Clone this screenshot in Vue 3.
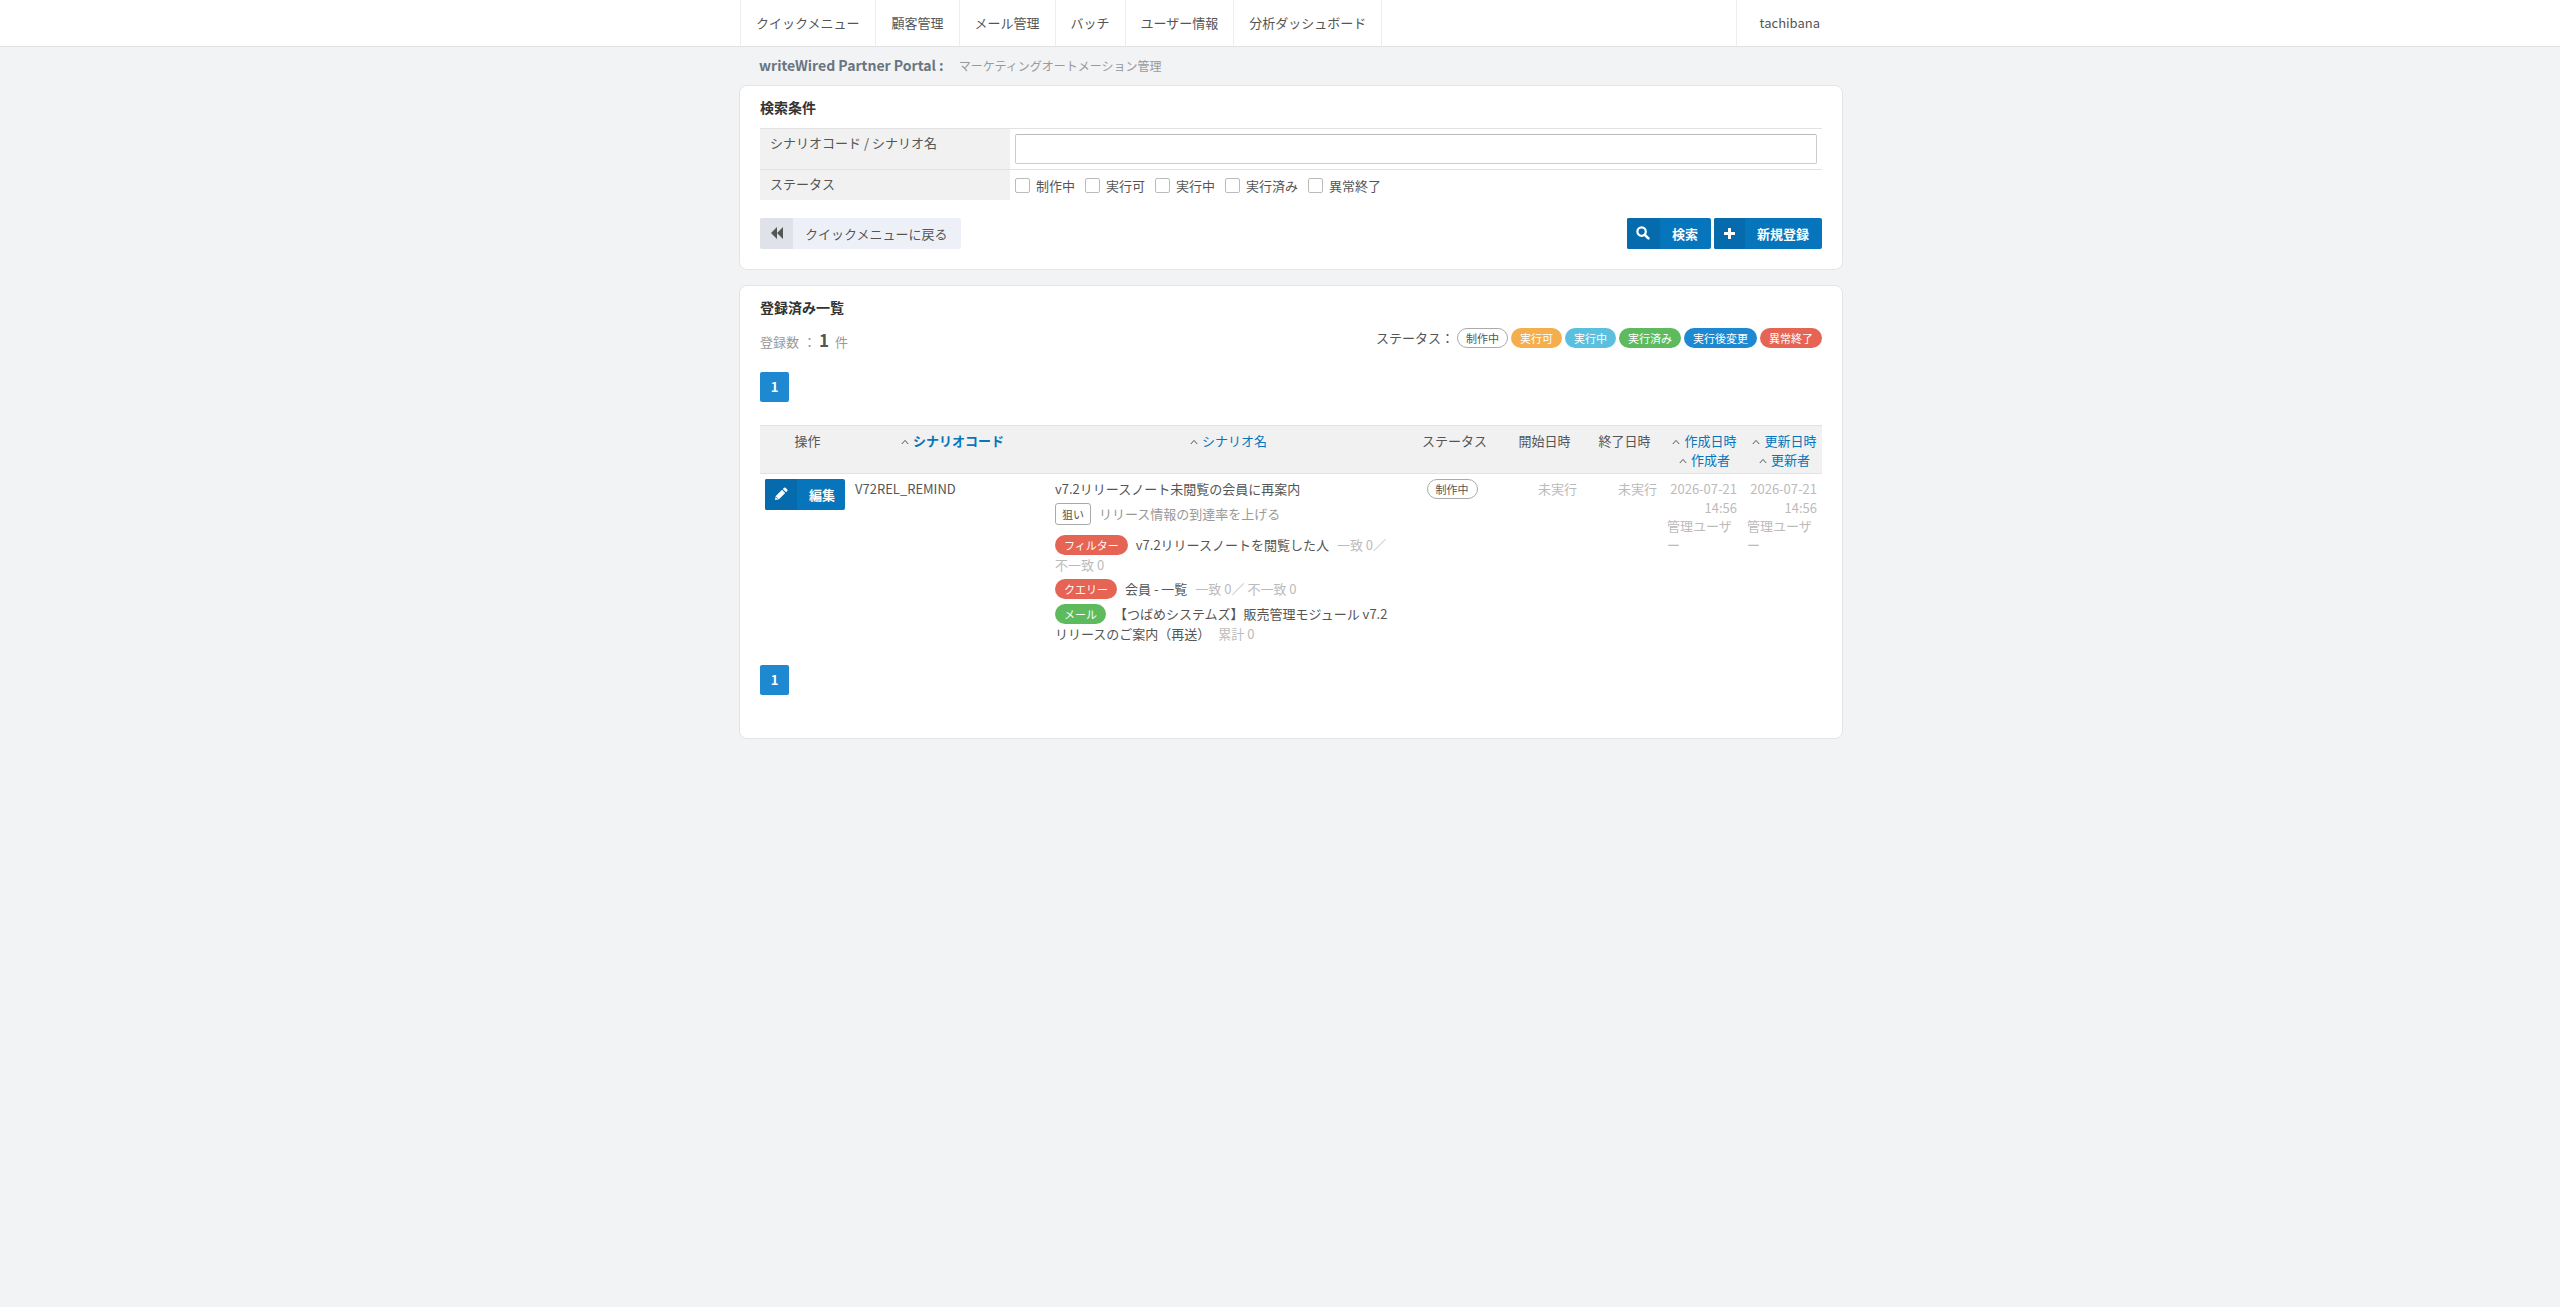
<script setup>
import {ref} from 'vue';

const menus = ['クイックメニュー', '顧客管理', 'メール管理', 'バッチ', 'ユーザー情報', '分析ダッシュボード'];

const keyword = ref('');
const checked = ref([]);
const statuses = ['制作中', '実行可', '実行中', '実行済み', '異常終了'];

const legends = [
  {label: '制作中', type: 'plain'},
  {label: '実行可', type: 'orange'},
  {label: '実行中', type: 'sky'},
  {label: '実行済み', type: 'green'},
  {label: '実行後変更', type: 'blue'},
  {label: '異常終了', type: 'red'}
];

const scenarios = [
  {
    code: 'V72REL_REMIND',
    name: 'v7.2リリースノート未閲覧の会員に再案内',
    aim: 'リリース情報の到達率を上げる',
    status: '制作中',
    start: '未実行',
    end: '未実行',
    date: '2026-07-21',
    time: '14:56',
    user: '管理ユーザー',
    steps: [
      {kind: 'フィルター', type: 'red', text: 'v7.2リリースノートを閲覧した人', result: '一致 0／ 不一致 0'},
      {kind: 'クエリー', type: 'red', text: '会員 - 一覧', result: '一致 0／ 不一致 0'},
      {kind: 'メール', type: 'green', text: '【つばめシステムズ】販売管理モジュール v7.2リリースのご案内（再送）', result: '累計 0'}
    ]
  }
];

// 並び替えできる列
const sortColumns = [
  ['作成日時', '作成者'],
  ['更新日時', '更新者']
];
</script>

<template>
<header class="header">
  <nav class="wrap nav">
    <a v-for="menu in menus" :key="menu" href="#" class="nav-item">{{ menu }}</a>
    <a href="#" class="nav-user">tachibana</a>
  </nav>
</header>

<main class="wrap">
  <div class="page-title">
    <h1>writeWired Partner Portal :</h1>
    <span>マーケティングオートメーション管理</span>
  </div>

  <section class="panel">
    <h2>検索条件</h2>
    <form @submit.prevent>
      <table class="search-table">
        <tbody>
          <tr>
            <th><label for="keyword">シナリオコード / シナリオ名</label></th>
            <td><input id="keyword" v-model="keyword" type="text" class="text-input"></td>
          </tr>
          <tr>
            <th>ステータス</th>
            <td>
              <div class="checks">
                <label v-for="status in statuses" :key="status">
                  <input v-model="checked" type="checkbox" :value="status">{{ status }}
                </label>
              </div>
            </td>
          </tr>
        </tbody>
      </table>
      <div class="actions">
        <a href="#" class="btn btn-back">
          <span class="btn-icon">
            <svg width="14" height="12" viewBox="0 0 14 12"><path d="M7 0v12L1 6zM13 0v12L7 6z"/></svg>
          </span>
          <span class="btn-text">クイックメニューに戻る</span>
        </a>
        <div class="actions-right">
          <button type="submit" class="btn btn-primary">
            <span class="btn-icon">
              <svg width="14" height="14" viewBox="0 0 14 14"><circle cx="5.6" cy="5.6" r="4.2" fill="none" stroke="#fff" stroke-width="2.2"/><path d="M8.8 8.8l3.6 3.6" stroke="#fff" stroke-width="2.6" stroke-linecap="round"/></svg>
            </span>
            <span class="btn-text">検索</span>
          </button>
          <button type="button" class="btn btn-primary btn-new">
            <span class="btn-icon">
              <svg width="11" height="11" viewBox="0 0 11 11"><path d="M4 0h3v4h4v3H7v4H4V7H0V4h4z"/></svg>
            </span>
            <span class="btn-text">新規登録</span>
          </button>
        </div>
      </div>
    </form>
  </section>

  <section class="panel panel-list">
    <h2>登録済み一覧</h2>
    <div class="toolbar">
      <p class="count"><span>登録数</span> ：<strong>1</strong> 件</p>
      <div class="legend">
        <span>ステータス：</span>
        <span v-for="item in legends" :key="item.label" class="badge" :class="item.type">{{ item.label }}</span>
      </div>
    </div>
    <div class="pager"><a href="#">1</a></div>

    <table class="list-table">
      <colgroup>
        <col class="col-edit">
        <col class="col-code">
        <col>
        <col class="col-status">
        <col v-for="n in 4" :key="n" class="col-date">
      </colgroup>
      <thead>
        <tr>
          <th>操作</th>
          <th><svg class="caret" width="8" height="6" viewBox="0 0 8 6"><path d="M.8 5L4 1.4 7.2 5"/></svg><a href="#" class="active">シナリオコード</a></th>
          <th><svg class="caret" width="8" height="6" viewBox="0 0 8 6"><path d="M.8 5L4 1.4 7.2 5"/></svg><a href="#">シナリオ名</a></th>
          <th>ステータス</th>
          <th>開始日時</th>
          <th>終了日時</th>
          <th v-for="col in sortColumns" :key="col[0]">
            <div v-for="label in col" :key="label"><svg class="caret" width="8" height="6" viewBox="0 0 8 6"><path d="M.8 5L4 1.4 7.2 5"/></svg><a href="#">{{ label }}</a></div>
          </th>
        </tr>
      </thead>
      <tbody>
        <tr v-for="row in scenarios" :key="row.code">
          <td>
            <button type="button" class="btn btn-primary btn-edit">
              <span class="btn-icon">
                <svg width="14" height="14" viewBox="0 0 14 14"><path d="M1 13l.8-4L8 2.8 11.2 6 5 12.2zM8.8 2l1.3-1.3q.7-.6 1.4 0l1.8 1.8q.6.7 0 1.4L12 5.2z"/><path d="M2.4 10.2l1.4 1.4" stroke="#066bad" stroke-width="1"/></svg>
              </span>
              <span class="btn-text">編集</span>
            </button>
          </td>
          <td>{{ row.code }}</td>
          <td>
            <div>{{ row.name }}</div>
            <div class="aim"><span class="tag">狙い</span>{{ row.aim }}</div>
            <ul class="steps">
              <li v-for="step in row.steps" :key="step.kind">
                <span class="badge" :class="step.type">{{ step.kind }}</span>{{ step.text }}<span class="result">{{ step.result }}</span>
              </li>
            </ul>
          </td>
          <td class="center"><span class="badge plain">{{ row.status }}</span></td>
          <td class="date">{{ row.start }}</td>
          <td class="date">{{ row.end }}</td>
          <td v-for="n in 2" :key="n" class="date">
            <div>{{ row.date }}<br>{{ row.time }}</div>
            <div class="user">{{ row.user }}</div>
          </td>
        </tr>
      </tbody>
    </table>
    <div class="pager pager-bottom"><a href="#">1</a></div>
  </section>
</main>
</template>

<style>
body{
  margin: 0;
  background: #f1f3f5;
}
</style>

<style scoped>
.header, .wrap{
  font-family: "Noto Sans CJK JP", sans-serif;
  font-size: 13px;
  line-height: 19px;
  color: #555;
}
*{
  box-sizing: border-box;
}
a{
  color: inherit;
  text-decoration: none;
}
.wrap{
  width: 100%;
  max-width: 1126px;
  margin: 0 auto;
  padding-left: 22px;
}
.header{
  background: #fff;
  border-bottom: 1px solid #dfe1e3;
}
.nav{
  display: flex;
  padding-left: 23px;
  line-height: 46px;
}
.nav-item{
  padding: 0 15px;
  border-right: 1px solid #eee;
}
.nav-item:first-child{
  padding-right: 16px;
  border-left: 1px solid #eee;
}
.nav-user{
  margin-left: auto;
  padding: 0 23px;
  border-left: 1px solid #eee;
}
.page-title{
  display: flex;
  align-items: center;
  height: 38px;
  padding: 0 0 2px 20px;
  gap: 15px;
}
.page-title h1{
  margin: 0;
  font-size: 14px;
  color: #6a757f;
}
.page-title span{
  font-size: 12px;
  color: #999;
}
.panel{
  background: #fff;
  border: 1px solid #e2e4e6;
  border-radius: 8px;
  padding: 11px 20px 20px;
  margin-bottom: 15px;
}
.panel-list{
  padding-bottom: 43px;
}
h2{
  margin: 0 0 11px;
  font-size: 14px;
  line-height: 20px;
  color: #333;
}
table{
  width: 100%;
  border-collapse: separate;
  border-spacing: 0;
  table-layout: fixed;
}
th{
  background: #f1f1f1;
  font-weight: normal;
  vertical-align: top;
}
td{
  vertical-align: top;
}
.search-table th{
  width: 250px;
  padding: 4px 10px 6px;
  text-align: left;
}
.search-table td{
  padding: 5px;
}
.search-table th, .search-table td{
  border-top: 1px solid #e2e2e2;
}
.text-input{
  display: block;
  width: 100%;
  height: 30px;
  padding: 0 8px;
  border: 1px solid #ccc;
  border-top-color: #bbb;
  border-radius: 2px;
  font: inherit;
}
.checks{
  display: flex;
  gap: 10px;
  height: 20px;
}
.checks label{
  display: flex;
  align-items: center;
  gap: 6px;
}
.checks input{
  appearance: none;
  width: 15px;
  height: 15px;
  margin: 1px 0 0;
  border: 1px solid #bbb;
  border-radius: 2px;
  background: #fff;
}
.checks input:checked{
  background: #0775bb;
}
.actions{
  display: flex;
  justify-content: space-between;
  margin-top: 18px;
}
.actions-right{
  display: flex;
  gap: 3px;
}
.btn{
  display: flex;
  height: 31px;
  padding: 0;
  border: none;
  border-radius: 2px;
  overflow: hidden;
  font: inherit;
  line-height: 31px;
  cursor: pointer;
}
.btn-icon{
  display: flex;
  align-items: center;
  justify-content: center;
  width: 33px;
  height: 31px;
  padding-bottom: 1px;
}
.btn-icon svg{
  fill: currentColor;
}
.btn-text{
  padding: 0 13px 0 12px;
}
.btn-back{
  background: #edf1f7;
}
.btn-back .btn-icon{
  background: #dfe2e8;
}
.btn-back .btn-text{
  padding-right: 14px;
}
.btn-primary{
  background: #0775bb;
  color: #fff;
  font-weight: bold;
}
.btn-primary .btn-icon{
  background: #066bad;
}
.btn-new .btn-icon{
  width: 31px;
}
.btn-edit .btn-icon{
  width: 32px;
}
.btn-edit .btn-text{
  padding-right: 10px;
}
.toolbar{
  display: flex;
  justify-content: space-between;
  align-items: flex-start;
  height: 34px;
}
.count{
  margin: 2px 0 0;
  line-height: 20px;
  color: #999;
}
.count span{
  margin-right: 1px;
}
.count strong{
  margin: 0 3px;
  font-size: 17px;
  color: #555;
}
.legend{
  display: flex;
  gap: 3px;
}
.badge{
  display: inline-block;
  height: 20px;
  padding: 0 9px;
  border-radius: 10px;
  font-size: 11px;
  line-height: 20px;
  color: #fff;
  vertical-align: top;
}
.badge.plain{
  padding: 0 8px;
  border: 1px solid #aaa;
  background: #fff;
  line-height: 18px;
  color: #555;
}
.badge.orange{
  background: #f4ae4d;
}
.badge.sky{
  background: #5bc0de;
}
.badge.green{
  background: #5dbb5d;
}
.badge.blue{
  background: #1e88d0;
}
.badge.red{
  background: #e66454;
}
.pager{
  display: flex;
  margin: 10px 0 23px;
}
.pager-bottom{
  margin: 12px 0 0;
}
.pager a{
  width: 29px;
  height: 30px;
  border-radius: 2px;
  background: #1e88d0;
  line-height: 30px;
  text-align: center;
  font-weight: bold;
  color: #fff;
}
.col-edit{
  width: 90px;
}
.col-code{
  width: 200px;
}
.col-status{
  width: 100px;
}
.col-date{
  width: 80px;
}
.list-table th{
  padding: 5px 5px 4px 10px;
  border-top: 1px solid #e2e2e2;
  border-bottom: 1px solid #e2e2e2;
  white-space: nowrap;
}
.list-table th a{
  color: #0775bb;
}
.list-table th .active{
  font-weight: bold;
}
.caret{
  margin-right: 4px;
  vertical-align: 1px;
  fill: none;
  stroke: #555;
}
.list-table td{
  padding: 5px;
}
.aim{
  margin-top: 5px;
  line-height: 22px;
  color: #999;
}
.tag{
  display: inline-block;
  height: 22px;
  margin-right: 8px;
  padding: 0 6px;
  border: 1px solid #aaa;
  border-radius: 3px;
  font-size: 11px;
  line-height: 20px;
  color: #555;
  vertical-align: top;
}
.steps{
  margin: 10px 0 0;
  padding: 0;
  list-style: none;
}
.steps li{
  margin-bottom: 5px;
}
.steps .badge{
  margin-right: 8px;
}
.result{
  margin-left: 8px;
  color: #bbb;
}
.center{
  text-align: center;
}
.date{
  text-align: right;
  color: #bbb;
}
.user{
  margin-top: -1px;
  text-align: left;
  line-break: anywhere;
}
</style>
